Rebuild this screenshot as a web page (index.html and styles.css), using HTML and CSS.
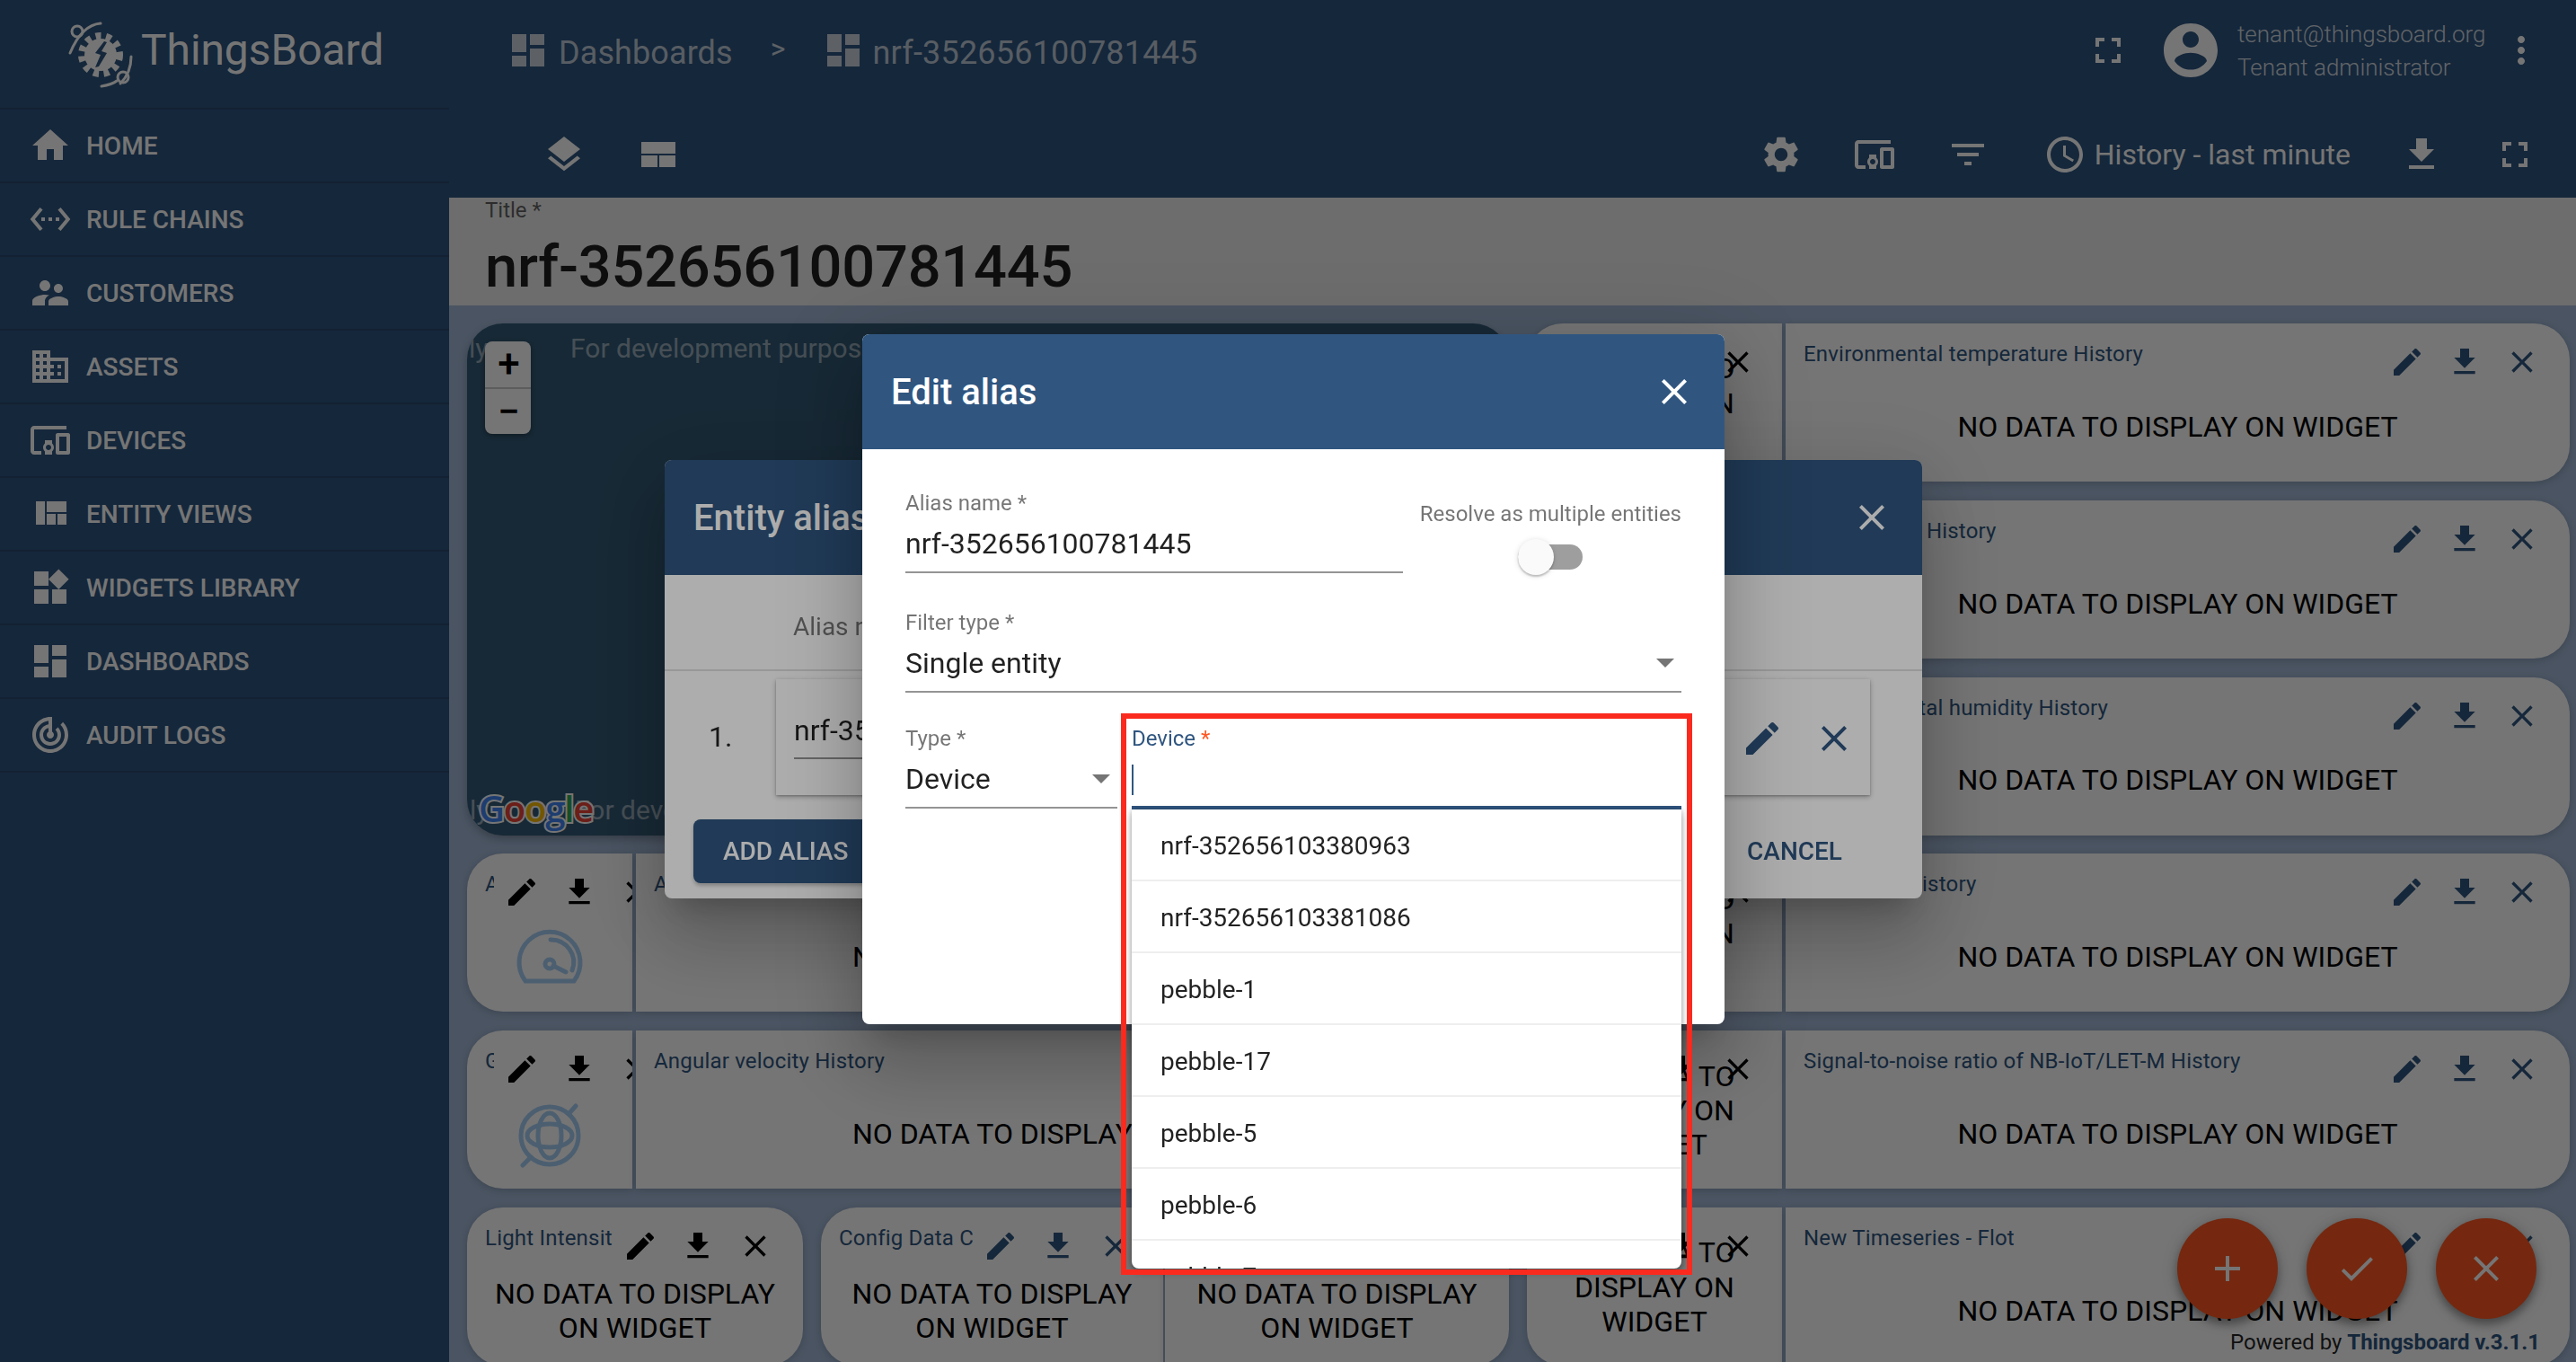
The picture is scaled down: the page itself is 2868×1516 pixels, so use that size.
FILE: index.html
```html
<!DOCTYPE html>
<html lang="en">
<head>
<meta charset="utf-8">
<title>ThingsBoard</title>
<link rel="stylesheet" href="styles.css">
</head>
<body>
<svg class="defs" xmlns="http://www.w3.org/2000/svg">
  <symbol id="i-home" viewBox="0 0 24 24"><path d="M10 20v-6h4v6h5v-8h3L12 3 2 12h3v8z"/></symbol>
  <symbol id="i-rule" viewBox="0 0 24 24"><path d="M7.77 6.76L6.23 5.48.82 12l5.41 6.52 1.54-1.28L3.42 12l4.35-5.24zM7 13h2v-2H7v2zm10-2h-2v2h2v-2zm-6 2h2v-2h-2v2zm6.77-7.52l-1.54 1.28L20.58 12l-4.35 5.24 1.54 1.28L23.18 12l-5.41-6.52z"/></symbol>
  <symbol id="i-cust" viewBox="0 0 24 24"><path d="M16.5 12c1.38 0 2.49-1.12 2.49-2.5S17.88 7 16.5 7C15.12 7 14 8.12 14 9.5s1.12 2.5 2.5 2.5zM9 11c1.66 0 2.99-1.34 2.99-3S10.66 5 9 5C7.34 5 6 6.34 6 8s1.34 3 3 3zm7.5 3c-1.83 0-5.5.92-5.5 2.75V19h11v-2.25c0-1.83-3.67-2.75-5.5-2.75zM9 13c-2.33 0-7 1.17-7 3.5V19h7v-2.25c0-.85.33-2.34 2.37-3.47C10.5 13.1 9.66 13 9 13z"/></symbol>
  <symbol id="i-domain" viewBox="0 0 24 24"><path d="M12 7V3H2v18h20V7H12zM6 19H4v-2h2v2zm0-4H4v-2h2v2zm0-4H4V9h2v2zm0-4H4V5h2v2zm4 12H8v-2h2v2zm0-4H8v-2h2v2zm0-4H8V9h2v2zm0-4H8V5h2v2zm10 12h-8v-2h2v-2h-2v-2h2v-2h-2V9h8v10zm-2-8h-2v2h2v-2zm0 4h-2v2h2v-2z"/></symbol>
  <symbol id="i-devices" viewBox="0 0 24 24"><path d="M3 6h18V4H3c-1.1 0-2 .9-2 2v12c0 1.1.9 2 2 2h4v-2H3V6zm10 6H9v1.78c-.61.55-1 1.33-1 2.22s.39 1.67 1 2.22V20h4v-1.78c.61-.55 1-1.34 1-2.22s-.39-1.67-1-2.22V12zm-2 5.5c-.83 0-1.5-.67-1.5-1.5s.67-1.5 1.5-1.5 1.5.67 1.5 1.5-.67 1.5-1.5 1.5zM22 8h-6c-.5 0-1 .5-1 1v10c0 .5.5 1 1 1h6c.5 0 1-.5 1-1V9c0-.5-.5-1-1-1zm-1 10h-4v-8h4v8z"/></symbol>
  <symbol id="i-quilt" viewBox="0 0 24 24"><path d="M10 18h5v-6h-5v6zm-6 0h5V5H4v13zm12 0h5v-6h-5v6zM10 5v6h11V5H10z"/></symbol>
  <symbol id="i-widgets" viewBox="0 0 24 24"><path d="M13 13v8h8v-8h-8zM3 21h8v-8H3v8zM3 3v8h8V3H3zm13.66-1.31L11 7.34 16.66 13l5.66-5.66-5.66-5.65z"/></symbol>
  <symbol id="i-dash" viewBox="0 0 24 24"><path d="M3 13h8V3H3v10zm0 8h8v-6H3v6zm10 0h8V11h-8v10zm0-18v6h8V3h-8z"/></symbol>
  <symbol id="i-track" viewBox="0 0 24 24"><path d="M19.07 4.93l-1.41 1.41C19.1 7.79 20 9.79 20 12c0 4.42-3.58 8-8 8s-8-3.58-8-8c0-4.08 3.05-7.44 7-7.93v2.02C8.16 6.57 6 9.03 6 12c0 3.31 2.69 6 6 6s6-2.69 6-6c0-1.66-.67-3.16-1.76-4.24l-1.41 1.41C15.55 9.9 16 10.9 16 12c0 2.21-1.79 4-4 4s-4-1.79-4-4c0-1.86 1.28-3.41 3-3.86v2.14c-.6.35-1 .98-1 1.72 0 1.1.9 2 2 2s2-.9 2-2c0-.74-.4-1.38-1-1.72V2h-1C6.48 2 2 6.48 2 12s4.48 10 10 10 10-4.48 10-10c0-2.76-1.12-5.26-2.93-7.07z"/></symbol>
  <symbol id="i-layers" viewBox="0 0 24 24"><path d="M11.99 18.54l-7.37-5.73L3 14.07l9 7 9-7-1.63-1.27-7.38 5.74zM12 16l7.36-5.73L21 9l-9-7-9 7 1.63 1.27L12 16z"/></symbol>
  <symbol id="i-layout" viewBox="0 0 24 24"><path d="M2.500 5h19v6.500h-19zM2.500 12.500h9v6.500h-9zM12.500 12.500h9v6.500h-9z"/></symbol>
  <symbol id="i-gear" viewBox="0 0 24 24"><path d="M19.14 12.94c.04-.3.06-.61.06-.94 0-.32-.02-.64-.07-.94l2.03-1.58c.18-.14.23-.41.12-.61l-1.92-3.32c-.12-.22-.37-.29-.59-.22l-2.39.96c-.5-.38-1.03-.7-1.62-.94l-.36-2.54c-.04-.24-.24-.41-.48-.41h-3.84c-.24 0-.43.17-.47.41l-.36 2.54c-.59.24-1.13.57-1.62.94l-2.39-.96c-.22-.08-.47 0-.59.22L2.74 8.87c-.12.21-.08.47.12.61l2.03 1.58c-.05.3-.09.63-.09.94s.02.64.07.94l-2.03 1.58c-.18.14-.23.41-.12.61l1.92 3.32c.12.22.37.29.59.22l2.39-.96c.5.38 1.03.7 1.62.94l.36 2.54c.05.24.24.41.48.41h3.84c.24 0 .44-.17.47-.41l.36-2.54c.59-.24 1.13-.56 1.62-.94l2.39.96c.22.08.47 0 .59-.22l1.92-3.32c.12-.22.07-.47-.12-.61l-2.01-1.58zM12 15.6c-1.98 0-3.6-1.62-3.6-3.6s1.62-3.6 3.6-3.6 3.6 1.62 3.6 3.6-1.62 3.6-3.6 3.6z"/></symbol>
  <symbol id="i-filter" viewBox="0 0 24 24"><path d="M10 18h4v-2h-4v2zM3 6v2h18V6H3zm3 7h12v-2H6v2z"/></symbol>
  <symbol id="i-clock" viewBox="0 0 24 24"><path d="M11.99 2C6.47 2 2 6.48 2 12s4.47 10 9.99 10C17.52 22 22 17.52 22 12S17.52 2 11.99 2zM12 20c-4.42 0-8-3.58-8-8s3.58-8 8-8 8 3.58 8 8-3.58 8-8 8zm.5-13H11v6l5.25 3.15.75-1.23-4.5-2.67z"/></symbol>
  <symbol id="i-dl" viewBox="0 0 24 24"><path d="M19 9h-4V3H9v6H5l7 7 7-7zM5 18v2h14v-2H5z"/></symbol>
  <symbol id="i-full" viewBox="0 0 24 24"><path d="M7 14H5v5h5v-2H7v-3zm-2-4h2V7h3V5H5v5zm12 7h-3v2h5v-5h-2v3zM14 5v2h3v3h2V5h-5z"/></symbol>
  <symbol id="i-account" viewBox="0 0 24 24"><path d="M12 2C6.48 2 2 6.48 2 12s4.48 10 10 10 10-4.48 10-10S17.52 2 12 2zm0 3c1.66 0 3 1.34 3 3s-1.34 3-3 3-3-1.34-3-3 1.34-3 3-3zm0 14.2c-2.5 0-4.71-1.28-6-3.22.03-1.99 4-3.08 6-3.08 1.99 0 5.97 1.09 6 3.08-1.29 1.94-3.5 3.22-6 3.22z"/></symbol>
  <symbol id="i-more" viewBox="0 0 24 24"><path d="M12 8c1.1 0 2-.9 2-2s-.9-2-2-2-2 .9-2 2 .9 2 2 2zm0 2c-1.1 0-2 .9-2 2s.9 2 2 2 2-.9 2-2-.9-2-2-2zm0 6c-1.1 0-2 .9-2 2s.9 2 2 2 2-.9 2-2-.9-2-2-2z"/></symbol>
  <symbol id="i-edit" viewBox="0 0 24 24"><path d="M3 17.25V21h3.75L17.81 9.94l-3.75-3.75L3 17.25zM20.71 7.04c.39-.39.39-1.02 0-1.41l-2.34-2.34c-.39-.39-1.02-.39-1.41 0l-1.83 1.83 3.75 3.75 1.83-1.83z"/></symbol>
  <symbol id="i-close" viewBox="0 0 24 24"><path d="M19 6.41L17.59 5 12 10.59 6.41 5 5 6.41 10.59 12 5 17.59 6.41 19 12 13.41 17.59 19 19 17.59 13.41 12z"/></symbol>
  <symbol id="i-add" viewBox="0 0 24 24"><path d="M19 13h-6v6h-2v-6H5v-2h6V5h2v6h6v2z"/></symbol>
  <symbol id="i-check" viewBox="0 0 24 24"><path d="M9 16.17L4.83 12l-1.42 1.41L9 19 21 7l-1.41-1.41z"/></symbol>
</svg>

<div class="app">
  <aside class="side">
    <div class="logo">
      <svg class="logo-mark" viewBox="0 0 80 80">
        <circle class="lm-teeth" cx="40" cy="40" r="21"/>
        <circle class="lm-gear" cx="40" cy="40" r="18"/>
        <path class="lm-bolt" d="M44 25l-10 13 6 2-6 14 4-1 9-15-6-2 6-10z"/>
        <path class="lm-line" d="M40 5C28 6 16 14 6 38"/>
        <circle class="lm-ring" cx="14" cy="14" r="6"/>
        <path class="lm-line" d="M74 42c0 12-4 22-12 30"/>
        <path class="lm-line" d="M41 75c6-1 12-2 17-6"/>
        <circle class="lm-ring" cx="65" cy="65" r="6"/>
      </svg>
      <span class="logo-text">ThingsBoard</span>
    </div>
    <nav class="nav">
      <a class="nav-item"><svg class="ic48"><use href="#i-home"/></svg><span>HOME</span></a>
      <a class="nav-item"><svg class="ic48"><use href="#i-rule"/></svg><span>RULE CHAINS</span></a>
      <a class="nav-item"><svg class="ic48"><use href="#i-cust"/></svg><span>CUSTOMERS</span></a>
      <a class="nav-item"><svg class="ic48"><use href="#i-domain"/></svg><span>ASSETS</span></a>
      <a class="nav-item"><svg class="ic48"><use href="#i-devices"/></svg><span>DEVICES</span></a>
      <a class="nav-item"><svg class="ic48"><use href="#i-quilt"/></svg><span>ENTITY VIEWS</span></a>
      <a class="nav-item"><svg class="ic48"><use href="#i-widgets"/></svg><span>WIDGETS LIBRARY</span></a>
      <a class="nav-item"><svg class="ic48"><use href="#i-dash"/></svg><span>DASHBOARDS</span></a>
      <a class="nav-item"><svg class="ic48"><use href="#i-track"/></svg><span>AUDIT LOGS</span></a>
    </nav>
  </aside>

  <main class="main">
    <header class="top">
      <div class="top-row top-row--crumbs">
        <svg class="ic48 crumb-ic"><use href="#i-dash"/></svg>
        <span class="crumb crumb--first">Dashboards</span>
        <span class="crumb-sep">&gt;</span>
        <svg class="ic48 crumb-ic"><use href="#i-dash"/></svg>
        <span class="crumb crumb--second">nrf-352656100781445</span>
        <div class="user">
          <svg class="ic48 user-full"><use href="#i-full"/></svg>
          <svg class="ic72"><use href="#i-account"/></svg>
          <div class="user-text">
            <div class="user-mail">tenant@thingsboard.org</div>
            <div class="user-role">Tenant administrator</div>
          </div>
          <svg class="ic48 user-more"><use href="#i-more"/></svg>
        </div>
      </div>
      <div class="top-row top-row--tools">
        <svg class="ic48"><use href="#i-layers"/></svg>
        <svg class="ic48"><use href="#i-layout"/></svg>
        <div class="tools">
          <svg class="ic48"><use href="#i-gear"/></svg>
          <svg class="ic48"><use href="#i-devices"/></svg>
          <svg class="ic48"><use href="#i-filter"/></svg>
          <div class="history"><svg class="ic48"><use href="#i-clock"/></svg><span>History - last minute</span></div>
          <svg class="ic48"><use href="#i-dl"/></svg>
          <svg class="ic48"><use href="#i-full"/></svg>
        </div>
      </div>
    </header>

    <section class="title-sec">
      <div class="title-label">Title *</div>
      <div class="title-value">nrf-352656100781445</div>
    </section>

    <section class="dash">
      <!-- rows 1-3 -->
      <div class="map">
        <span class="map-note map-note--tl">ly</span>
        <span class="map-note map-note--t">For development purposes only</span>
        <span class="map-note map-note--bl">ly</span>
        <span class="map-note map-note--b">For development purposes only</span>
        <div class="zoom"><span class="zoom-b">+</span><span class="zoom-b">−</span></div>
        <div class="google"><span class="g-b">G</span><span class="g-r">o</span><span class="g-y">o</span><span class="g-b">g</span><span class="g-g">l</span><span class="g-r">e</span></div>
      </div>

      <article class="w w--c5 w--lr w--dark">
        <div class="w-head"><div class="w-title">Acceleration</div><div class="w-acts"><svg class="ic40"><use href="#i-edit"/></svg><svg class="ic40"><use href="#i-dl"/></svg><svg class="ic40"><use href="#i-close"/></svg></div></div>
        <div class="w-body w-body--up">NO DATA TO DISPLAY ON WIDGET</div>
      </article>
      <article class="w w--c6 w--rr">
        <div class="w-head"><div class="w-title">Environmental temperature History</div><div class="w-acts"><svg class="ic40"><use href="#i-edit"/></svg><svg class="ic40"><use href="#i-dl"/></svg><svg class="ic40"><use href="#i-close"/></svg></div></div>
        <div class="w-body">NO DATA TO DISPLAY ON WIDGET</div>
      </article>

      <article class="w w--c5 w--lr w--dark">
        <div class="w-head"><div class="w-title">Pressure</div><div class="w-acts"><svg class="ic40"><use href="#i-edit"/></svg><svg class="ic40"><use href="#i-dl"/></svg><svg class="ic40"><use href="#i-close"/></svg></div></div>
        <div class="w-body w-body--up">NO DATA TO DISPLAY ON WIDGET</div>
      </article>
      <article class="w w--c6 w--rr">
        <div class="w-head"><div class="w-title">Air pressure History</div><div class="w-acts"><svg class="ic40"><use href="#i-edit"/></svg><svg class="ic40"><use href="#i-dl"/></svg><svg class="ic40"><use href="#i-close"/></svg></div></div>
        <div class="w-body">NO DATA TO DISPLAY ON WIDGET</div>
      </article>

      <article class="w w--c5 w--lr w--dark">
        <div class="w-head"><div class="w-title">Humidity</div><div class="w-acts"><svg class="ic40"><use href="#i-edit"/></svg><svg class="ic40"><use href="#i-dl"/></svg><svg class="ic40"><use href="#i-close"/></svg></div></div>
        <div class="w-body w-body--up">NO DATA TO DISPLAY ON WIDGET</div>
      </article>
      <article class="w w--c6 w--rr">
        <div class="w-head"><div class="w-title">Environmental humidity History</div><div class="w-acts"><svg class="ic40"><use href="#i-edit"/></svg><svg class="ic40"><use href="#i-dl"/></svg><svg class="ic40"><use href="#i-close"/></svg></div></div>
        <div class="w-body">NO DATA TO DISPLAY ON WIDGET</div>
      </article>

      <!-- row 4 -->
      <article class="w w--c1 w--lr w--dark">
        <div class="w-head"><div class="w-title">Acceleration</div><div class="w-acts"><svg class="ic40"><use href="#i-edit"/></svg><svg class="ic40"><use href="#i-dl"/></svg><svg class="ic40"><use href="#i-close"/></svg></div></div>
        <div class="w-body w-body--icon">
          <svg class="gauge" viewBox="-3 -3 78 62"><path d="M9 55A34 34 0 1 1 63 55Z"/><path d="M37 9a25 25 0 0 1 24 34"/><circle cx="36" cy="36" r="5"/><path d="M40 38l14 7"/></svg>
        </div>
      </article>
      <article class="w w--c2 w--rr">
        <div class="w-head"><div class="w-title">Acceleration History</div><div class="w-acts"><svg class="ic40"><use href="#i-edit"/></svg><svg class="ic40"><use href="#i-dl"/></svg><svg class="ic40"><use href="#i-close"/></svg></div></div>
        <div class="w-body">NO DATA TO DISPLAY ON WIDGET</div>
      </article>
      <article class="w w--c5 w--lr w--dark">
        <div class="w-head"><div class="w-title">Air quality</div><div class="w-acts"><svg class="ic40"><use href="#i-edit"/></svg><svg class="ic40"><use href="#i-dl"/></svg><svg class="ic40"><use href="#i-close"/></svg></div></div>
        <div class="w-body w-body--up">NO DATA TO DISPLAY ON WIDGET</div>
      </article>
      <article class="w w--c6 w--rr">
        <div class="w-head"><div class="w-title">Air quality History</div><div class="w-acts"><svg class="ic40"><use href="#i-edit"/></svg><svg class="ic40"><use href="#i-dl"/></svg><svg class="ic40"><use href="#i-close"/></svg></div></div>
        <div class="w-body">NO DATA TO DISPLAY ON WIDGET</div>
      </article>

      <!-- row 5 -->
      <article class="w w--c1 w--lr w--dark">
        <div class="w-head"><div class="w-title">Gyroscope</div><div class="w-acts"><svg class="ic40"><use href="#i-edit"/></svg><svg class="ic40"><use href="#i-dl"/></svg><svg class="ic40"><use href="#i-close"/></svg></div></div>
        <div class="w-body w-body--icon">
          <svg class="orbit" viewBox="0 0 72 72"><circle cx="36" cy="36" r="32"/><ellipse cx="36" cy="36" rx="25" ry="13"/><ellipse cx="36" cy="36" rx="13" ry="25"/><path d="M57 12l8-9M15 60l-9 9"/></svg>
        </div>
      </article>
      <article class="w w--c2 w--rr">
        <div class="w-head"><div class="w-title">Angular velocity History</div><div class="w-acts"><svg class="ic40"><use href="#i-edit"/></svg><svg class="ic40"><use href="#i-dl"/></svg><svg class="ic40"><use href="#i-close"/></svg></div></div>
        <div class="w-body">NO DATA TO DISPLAY ON WIDGET</div>
      </article>
      <article class="w w--c5 w--lr w--dark">
        <div class="w-head"><div class="w-title">Signal</div><div class="w-acts"><svg class="ic40"><use href="#i-edit"/></svg><svg class="ic40"><use href="#i-dl"/></svg><svg class="ic40"><use href="#i-close"/></svg></div></div>
        <div class="w-body w-body--up">NO DATA TO DISPLAY ON WIDGET</div>
      </article>
      <article class="w w--c6 w--rr">
        <div class="w-head"><div class="w-title">Signal-to-noise ratio of NB-IoT/LET-M History</div><div class="w-acts"><svg class="ic40"><use href="#i-edit"/></svg><svg class="ic40"><use href="#i-dl"/></svg><svg class="ic40"><use href="#i-close"/></svg></div></div>
        <div class="w-body">NO DATA TO DISPLAY ON WIDGET</div>
      </article>

      <!-- row 6 -->
      <article class="w w--c12 w--all w--dark">
        <div class="w-head"><div class="w-title">Light Intensity</div><div class="w-acts"><svg class="ic40"><use href="#i-edit"/></svg><svg class="ic40"><use href="#i-dl"/></svg><svg class="ic40"><use href="#i-close"/></svg></div></div>
        <div class="w-body">NO DATA TO DISPLAY ON WIDGET</div>
      </article>
      <article class="w w--c3 w--lr">
        <div class="w-head"><div class="w-title">Config Data Configuration</div><div class="w-acts"><svg class="ic40"><use href="#i-edit"/></svg><svg class="ic40"><use href="#i-dl"/></svg><svg class="ic40"><use href="#i-close"/></svg></div></div>
        <div class="w-body">NO DATA TO DISPLAY ON WIDGET</div>
      </article>
      <article class="w w--c4 w--rr">
        <div class="w-body w-body--full">NO DATA TO DISPLAY ON WIDGET</div>
      </article>
      <article class="w w--c5 w--lr w--dark">
        <div class="w-head"><div class="w-title">Timeseries</div><div class="w-acts"><svg class="ic40"><use href="#i-edit"/></svg><svg class="ic40"><use href="#i-dl"/></svg><svg class="ic40"><use href="#i-close"/></svg></div></div>
        <div class="w-body w-body--up">NO DATA TO DISPLAY ON WIDGET</div>
      </article>
      <article class="w w--c6 w--rr">
        <div class="w-head"><div class="w-title">New Timeseries - Flot</div><div class="w-acts"><svg class="ic40"><use href="#i-edit"/></svg><svg class="ic40"><use href="#i-dl"/></svg><svg class="ic40"><use href="#i-close"/></svg></div></div>
        <div class="w-body">NO DATA TO DISPLAY ON WIDGET</div>
      </article>
    </section>

    <div class="fabs">
      <button class="fab"><svg class="ic48"><use href="#i-add"/></svg></button>
      <button class="fab"><svg class="ic48"><use href="#i-check"/></svg></button>
      <button class="fab"><svg class="ic48"><use href="#i-close"/></svg></button>
    </div>
    <div class="powered">Powered by <b>Thingsboard v.3.1.1</b></div>
  </main>
</div>

<div class="backdrop"></div>

<div class="dialog dialog--entity">
  <div class="dlg-head"><h2>Entity aliases</h2><svg class="ic48"><use href="#i-close"/></svg></div>
  <div class="al-thead">Alias name</div>
  <div class="al-row">
    <div class="al-num">1.</div>
    <div class="al-card">
      <div class="al-input">nrf-352656100781445</div>
      <div class="al-acts"><svg class="ic48"><use href="#i-edit"/></svg><svg class="ic48"><use href="#i-close"/></svg></div>
    </div>
  </div>
  <div class="al-foot">
    <button class="btn btn--fill">ADD ALIAS</button>
    <button class="btn btn--text">CANCEL</button>
  </div>
</div>

<div class="backdrop"></div>

<div class="dialog dialog--edit">
  <div class="dlg-head"><h2>Edit alias</h2><svg class="ic48"><use href="#i-close"/></svg></div>
  <div class="ed-body">
    <div class="ed-row">
      <div class="field field--name">
        <label class="f-label">Alias name *</label>
        <div class="f-value">nrf-352656100781445</div>
      </div>
      <div class="toggle-box">
        <div class="toggle-label">Resolve as multiple entities</div>
        <div class="toggle"><span class="toggle-track"></span><span class="toggle-thumb"></span></div>
      </div>
    </div>
    <div class="ed-row">
      <div class="field field--wide">
        <label class="f-label">Filter type *</label>
        <div class="f-value f-value--select">Single entity<i class="arrow"></i></div>
      </div>
    </div>
    <div class="ed-row ed-row--type">
      <div class="field field--type">
        <label class="f-label">Type *</label>
        <div class="f-value f-value--select">Device<i class="arrow"></i></div>
      </div>
      <div class="field field--device">
        <label class="f-label f-label--focus">Device <em>*</em></label>
        <div class="f-value f-value--focus"><span class="caret"></span></div>
        <ul class="drop">
          <li>nrf-352656103380963</li>
          <li>nrf-352656103381086</li>
          <li>pebble-1</li>
          <li>pebble-17</li>
          <li>pebble-5</li>
          <li>pebble-6</li>
          <li>pebble-7</li>
        </ul>
      </div>
    </div>
  </div>
</div>

<div class="mark"></div>
</body>
</html>
```
FILE: styles.css
```css
* { box-sizing: border-box; }
html, body { margin: 0; padding: 0; height: 100%; overflow: hidden; }
body { font-family: Roboto, "Liberation Sans", sans-serif; color: #000; background: #a2b8d6; }
.defs { position: absolute; width: 0; height: 0; }
svg { fill: currentColor; flex: none; display: block; }
.ic40 { width: 40px; height: 40px; }
.ic48 { width: 48px; height: 48px; }
.ic72 { width: 72px; height: 72px; }

.app { display: flex; height: 1516px; width: 2868px; overflow: hidden; position: relative; isolation: isolate; }

/* sidebar */
.side { width: 500px; flex: none; background: #305680; color: #fff; }
.logo { height: 122px; display: flex; align-items: center; padding-left: 72px; border-bottom: 2px solid rgba(0,0,0,.12); }
.logo-mark { width: 80px; height: 80px; margin-top: 2px; }
.logo-text { font-size: 48px; font-weight: 400; margin-left: 5px; margin-top: -10px; letter-spacing: -.1px; }
.lm-teeth { fill: none; stroke: #fff; stroke-width: 8; stroke-dasharray: 6 5.6; }
.lm-gear { fill: #fff; }
.lm-bolt { fill: #305680; }
.lm-line { fill: none; stroke: #fff; stroke-width: 3; stroke-linecap: round; }
.lm-ring { fill: none; stroke: #fff; stroke-width: 3; }
.nav-item { height: 82px; display: flex; align-items: center; padding-left: 32px; gap: 16px; border-bottom: 2px solid rgba(0,0,0,.12); font-size: 28px; font-weight: 500; }

/* header */
.main { flex: 1; min-width: 0; display: flex; flex-direction: column; position: relative; }
.top { height: 220px; flex: none; background: #305680; color: #fff; }
.top-row { display: flex; align-items: center; }
.top-row--crumbs { height: 112px; padding-left: 64px; }
.top-row--tools { height: 108px; padding: 12px 44px 0 104px; gap: 57px; }
.crumb-ic { color: rgba(255,255,255,.75); }
.crumb { font-size: 36px; color: rgba(255,255,255,.7); margin-top: 6px; }
.crumb--first { margin-left: 10px; letter-spacing: .1px; }
.crumb--second { margin-left: 8px; letter-spacing: .2px; }
.crumb-sep { font-size: 32px; color: rgba(255,255,255,.75); margin: -4px 41px 0 42px; }
.user { margin-left: auto; display: flex; align-items: center; padding-right: 37px; }
.user-full { margin-right: 32px; }
.user-text { margin-left: 16px; width: 292px; font-size: 26px; font-weight: 300; color: rgba(255,255,255,.8); line-height: 37px; margin-top: 1px; }
.tools { margin-left: auto; display: flex; align-items: center; gap: 56px; }
.history { display: flex; align-items: center; font-size: 32px; margin-left: 4px; margin-right: -1px; gap: 9px; }

/* title */
.title-sec { height: 120px; flex: none; background: #eee; padding-left: 40px; overflow: hidden; }
.title-label { font-size: 24px; line-height: 26px; margin-top: 1px; color: rgba(0,0,0,.6); }
.title-value { font-size: 65px; line-height: 76px; margin-top: 12px; color: rgba(0,0,0,.87); font-weight: 500; letter-spacing: -.25px; }

/* dashboard grid */
.dash {
  flex: 1; min-height: 0; overflow: hidden;
  padding: 20px 0 0 20px;
  display: grid;
  grid-template-columns: 184px 4px 186px 20px 383px 383px 20px 284px 4px 873px;
  grid-auto-rows: 176px;
  row-gap: 20.8px;
}
.map { grid-column: 1 / 7; grid-row: 1 / 4; background: #345b77; border-radius: 40px; position: relative; overflow: hidden; box-shadow: 0 4px 10px rgba(0,0,0,.25); color: rgba(255,255,255,.5); }
.map-note { position: absolute; font-size: 30px; line-height: 34px; white-space: nowrap; }
.map-note--t { left: 115px; top: 11px; }
.map-note--tl { left: 2px; top: 11px; }
.map-note--b { left: 120px; top: 525px; }
.map-note--bl { left: 3px; top: 525px; }
.zoom { position: absolute; left: 20px; top: 20px; width: 51px; height: 103px; background: #fff; border-radius: 8px; display: flex; flex-direction: column; color: #000; box-shadow: 0 2px 6px rgba(0,0,0,.35); }
.zoom-b { flex: 1; display: flex; align-items: center; justify-content: center; font-size: 44px; font-weight: 500; line-height: 1; padding-left: 2px; }
.zoom-b:first-child { border-bottom: 2px solid #ccc; }
.google { position: absolute; left: 13px; bottom: 2px; font-family: "Open Sans", Roboto, sans-serif; font-size: 40px; font-weight: 600; line-height: 56px; letter-spacing: -1.2px; -webkit-text-stroke: 4px #fff; paint-order: stroke fill; }
.g-b { color: #4285f4; } .g-r { color: #ea4335; } .g-y { color: #fbbc05; } .g-g { color: #34a853; }

.w { background: #fff; position: relative; overflow: hidden; display: flex; flex-direction: column; min-width: 0; box-shadow: 0 2px 8px rgba(0,0,0,.18); color: #305680; }
.w--c1 { grid-column: 1; }
.w--c2 { grid-column: 3 / 7; }
.w--c12 { grid-column: 1 / 4; }
.w--c3 { grid-column: 5; border-right: 2px solid #a2b8d6; }
.w--c4 { grid-column: 6; }
.w--c5 { grid-column: 8; }
.w--c6 { grid-column: 10; }
.w--lr { border-radius: 40px 0 0 40px; }
.w--rr { border-radius: 0 40px 40px 0; }
.w--all { border-radius: 40px; }
.w--dark .w-acts { color: #000; }
.w-head { height: 54px; flex: none; display: flex; padding: 0 33px 0 20px; gap: 11px; position: relative; z-index: 1; }
.w--c5 .w-head { padding-right: 29px; }
.w-title { flex: 1 1 0; min-width: 10px; font-size: 24px; line-height: 28px; margin-top: 20px; white-space: nowrap; overflow: hidden; letter-spacing: .2px; }
.w-acts { display: flex; gap: 24px; margin-top: 23px; height: 40px; flex: none; }
.w-body { flex: 1; display: flex; align-items: center; justify-content: center; text-align: center; padding: 0 20px; font-size: 32px; line-height: 38.4px; color: #000; }
.w-body--up { margin-top: -52px; }
.w-body--full { flex: none; height: 176px; padding-top: 54px; }
.gauge, .orbit { fill: none; stroke: #a6cff6; stroke-width: 5; stroke-linecap: round; }
.gauge { width: 78px; height: 62px; margin-top: -1px; }
.orbit { width: 72px; height: 72px; margin-top: 3px; }
.w-body--icon { padding: 0; }

/* floating */
.fabs { position: absolute; right: 44px; bottom: 48px; display: flex; gap: 32px; z-index: 2; }
.fab { width: 112px; height: 112px; border: 0; padding: 0; border-radius: 50%; background: #ff5722; color: #fff; display: flex; align-items: center; justify-content: center; box-shadow: 0 6px 10px rgba(0,0,0,.3), 0 2px 18px rgba(0,0,0,.2); }
.powered { position: absolute; right: 40px; bottom: 8px; font-size: 24px; line-height: 28px; color: rgba(0,0,0,.87); z-index: 2; }
.powered b { color: #305680; font-weight: 700; }

/* overlays */
.backdrop { position: fixed; inset: 0; background: rgba(0,0,0,.32); }
.dialog { position: fixed; background: #fff; border-radius: 8px; box-shadow: 0 22px 30px -14px rgba(0,0,0,.2), 0 48px 76px 6px rgba(0,0,0,.14), 0 18px 92px 16px rgba(0,0,0,.12); display: flex; flex-direction: column; }
.dialog--entity { left: 740px; top: 512px; width: 1400px; height: 488px; }
.dialog--edit { left: 960px; top: 372px; width: 960px; height: 768px; }
.dlg-head { height: 128px; flex: none; background: #305680; color: #fff; border-radius: 8px 8px 0 0; display: flex; align-items: center; justify-content: space-between; padding: 0 32px; }
.dlg-head h2 { margin: 2px 0 0; font-size: 40px; font-weight: 500; line-height: 48px; }

.al-thead { height: 107px; flex: none; padding: 41px 0 0 143px; font-size: 28px; line-height: 34px; color: rgba(0,0,0,.54); border-bottom: 2px solid rgba(0,0,0,.12); }
.al-row { display: flex; padding: 9px 58px 0 49px; }
.al-num { width: 75px; font-size: 32px; line-height: 128px; color: rgba(0,0,0,.87); }
.al-card { flex: 1; height: 129px; display: flex; align-items: center; justify-content: flex-end; position: relative; background: #fff; box-shadow: 0 2px 6px rgba(0,0,0,.3), 0 1px 2px rgba(0,0,0,.2); padding: 0 16px 0 20px; }
.al-input { flex: 1; font-size: 32px; line-height: 40px; padding-bottom: 10px; border-bottom: 2px solid rgba(0,0,0,.42); margin: -4px 80px 0 0; color: rgba(0,0,0,.87); }
.al-acts { display: flex; gap: 32px; color: #305680; margin-top: 3px; }
.al-foot { display: flex; justify-content: space-between; padding: 27px 56px 0 32px; }
.btn { height: 71px; border: 0; border-radius: 8px; font: 500 28px Roboto, sans-serif; padding: 0 33px; }
.btn--fill { background: #305680; color: #fff; box-shadow: 0 3px 4px rgba(0,0,0,.25); }
.btn--text { background: none; color: #305680; }

/* edit dialog */
.ed-body { padding: 46px 48px 0; display: flex; flex-direction: column; gap: 39px; }
.ed-row { display: flex; }
.ed-row--type { gap: 16px; margin-top: -2px; }
.field { position: relative; border-bottom: 2px solid rgba(0,0,0,.42); height: 92px; }
.field--name { width: 554px; }
.field--wide { flex: 1; }
.field--type { width: 236px; }
.field--device { width: 612px; border-bottom: 4px solid #305680; height: 93px; }
.f-label { display: block; font-size: 24px; line-height: 28px; color: rgba(0,0,0,.54); }
.f-label--focus { color: #305680; }
.f-label em { color: #ff5722; font-style: normal; }
.f-value { font-size: 32px; line-height: 40px; margin-top: 11px; color: rgba(0,0,0,.87); display: flex; align-items: center; justify-content: space-between; }
.f-value--focus { justify-content: flex-start; }
.arrow { width: 0; height: 0; border-left: 10px solid transparent; border-right: 10px solid transparent; border-top: 10px solid rgba(0,0,0,.54); margin-right: 8px; }
.caret { width: 2px; height: 34px; background: #305680; margin-top: 4px; }
.toggle-box { flex: 1; margin-left: 19px; display: flex; flex-direction: column; align-items: center; padding-top: 12px; }
.toggle-label { font-size: 24px; line-height: 28px; color: rgba(0,0,0,.54); white-space: nowrap; }
.toggle { position: relative; width: 72px; height: 40px; margin-top: 14px; }
.toggle-track { position: absolute; left: 0; right: 0; top: 6px; height: 28px; border-radius: 14px; background: rgba(0,0,0,.38); }
.toggle-thumb { position: absolute; left: 0; top: 0; width: 40px; height: 40px; border-radius: 50%; background: #fafafa; box-shadow: 0 2px 2px rgba(0,0,0,.2), 0 1px 6px rgba(0,0,0,.15); }
.drop { position: absolute; left: 0; right: 0; top: calc(100% + 4px); height: 511px; margin: 0; padding: 0; list-style: none; background: #fff; overflow: hidden; border-radius: 0 0 8px 8px; box-shadow: 0 4px 8px rgba(0,0,0,.3), 0 0 6px rgba(0,0,0,.2); z-index: 3; }
.drop li { height: 80px; border-bottom: 2px solid #eee; padding-left: 32px; font-size: 28px; line-height: 82px; color: rgba(0,0,0,.87); }

.mark { position: fixed; left: 1248px; top: 794px; width: 636px; height: 625px; border: 6px solid #fb2a1e; pointer-events: none; }
```
